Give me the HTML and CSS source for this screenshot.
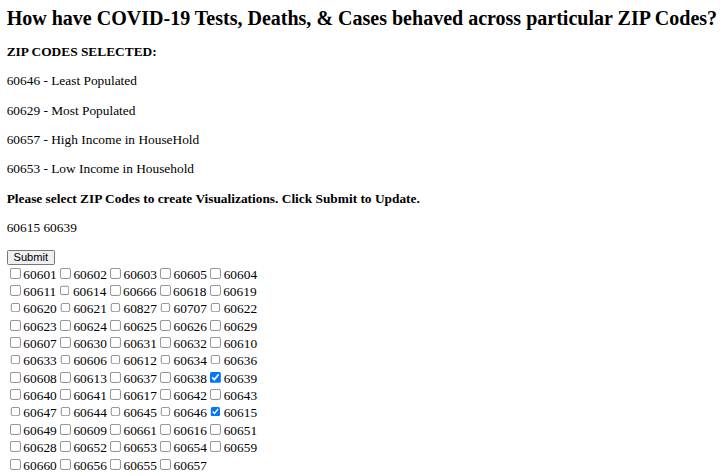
FILE: index.html
```html
<!DOCTYPE html>
<html>
<head>
<meta charset="utf-8">
<link rel="stylesheet" href="styles.css">
</head>
<body class="page">
<h2 class="title">How have COVID-19 Tests, Deaths, &amp; Cases behaved across particular ZIP Codes?</h2>
<p class="txt"><b>ZIP CODES SELECTED:</b></p>
<p class="txt">60646 - Least Populated</p>
<p class="txt">60629 - Most Populated</p>
<p class="txt">60657 - High Income in HouseHold</p>
<p class="txt">60653 - Low Income in Household</p>
<p class="txt"><b>Please select ZIP Codes to create Visualizations. Click Submit to Update.</b></p>
<p class="txt">60615 60639</p>
<form class="form">
<button type="button" class="btn">Submit</button>
<div class="list">
<div class="row"><label><input type="checkbox">60601</label><label><input type="checkbox">60602</label><label><input type="checkbox">60603</label><label><input type="checkbox">60605</label><label><input type="checkbox">60604</label></div>
<div class="row"><label><input type="checkbox">60611</label><label><input type="checkbox">60614</label><label><input type="checkbox">60666</label><label><input type="checkbox">60618</label><label><input type="checkbox">60619</label></div>
<div class="row"><label><input type="checkbox">60620</label><label><input type="checkbox">60621</label><label><input type="checkbox">60827</label><label><input type="checkbox">60707</label><label><input type="checkbox">60622</label></div>
<div class="row"><label><input type="checkbox">60623</label><label><input type="checkbox">60624</label><label><input type="checkbox">60625</label><label><input type="checkbox">60626</label><label><input type="checkbox">60629</label></div>
<div class="row"><label><input type="checkbox">60607</label><label><input type="checkbox">60630</label><label><input type="checkbox">60631</label><label><input type="checkbox">60632</label><label><input type="checkbox">60610</label></div>
<div class="row"><label><input type="checkbox">60633</label><label><input type="checkbox">60606</label><label><input type="checkbox">60612</label><label><input type="checkbox">60634</label><label><input type="checkbox">60636</label></div>
<div class="row"><label><input type="checkbox">60608</label><label><input type="checkbox">60613</label><label><input type="checkbox">60637</label><label><input type="checkbox">60638</label><label><input type="checkbox" checked>60639</label></div>
<div class="row"><label><input type="checkbox">60640</label><label><input type="checkbox">60641</label><label><input type="checkbox">60617</label><label><input type="checkbox">60642</label><label><input type="checkbox">60643</label></div>
<div class="row"><label><input type="checkbox">60647</label><label><input type="checkbox">60644</label><label><input type="checkbox">60645</label><label><input type="checkbox">60646</label><label><input type="checkbox" checked>60615</label></div>
<div class="row"><label><input type="checkbox">60649</label><label><input type="checkbox">60609</label><label><input type="checkbox">60661</label><label><input type="checkbox">60616</label><label><input type="checkbox">60651</label></div>
<div class="row"><label><input type="checkbox">60628</label><label><input type="checkbox">60652</label><label><input type="checkbox">60653</label><label><input type="checkbox">60654</label><label><input type="checkbox">60659</label></div>
<div class="row"><label><input type="checkbox">60660</label><label><input type="checkbox">60656</label><label><input type="checkbox">60655</label><label><input type="checkbox">60657</label></div>
</div>
</form>
</body>
</html>
```
FILE: styles.css
```css
html { zoom: 0.835; }
.page {
  margin: 8px;
  font-family: "Liberation Serif", "Times New Roman", serif;
  font-size: 16px;
  color: #000;
  background: #fff;
}
.title { font-size: 24px; font-weight: bold; margin: 0 0 17px; }
.txt { margin: 16px 0; }
.form { margin: 0; }
.btn { font-family: Arial, "Liberation Sans", sans-serif; font-size: 13.33px; padding: 1px 7px; }
.row { line-height: normal; }
```
